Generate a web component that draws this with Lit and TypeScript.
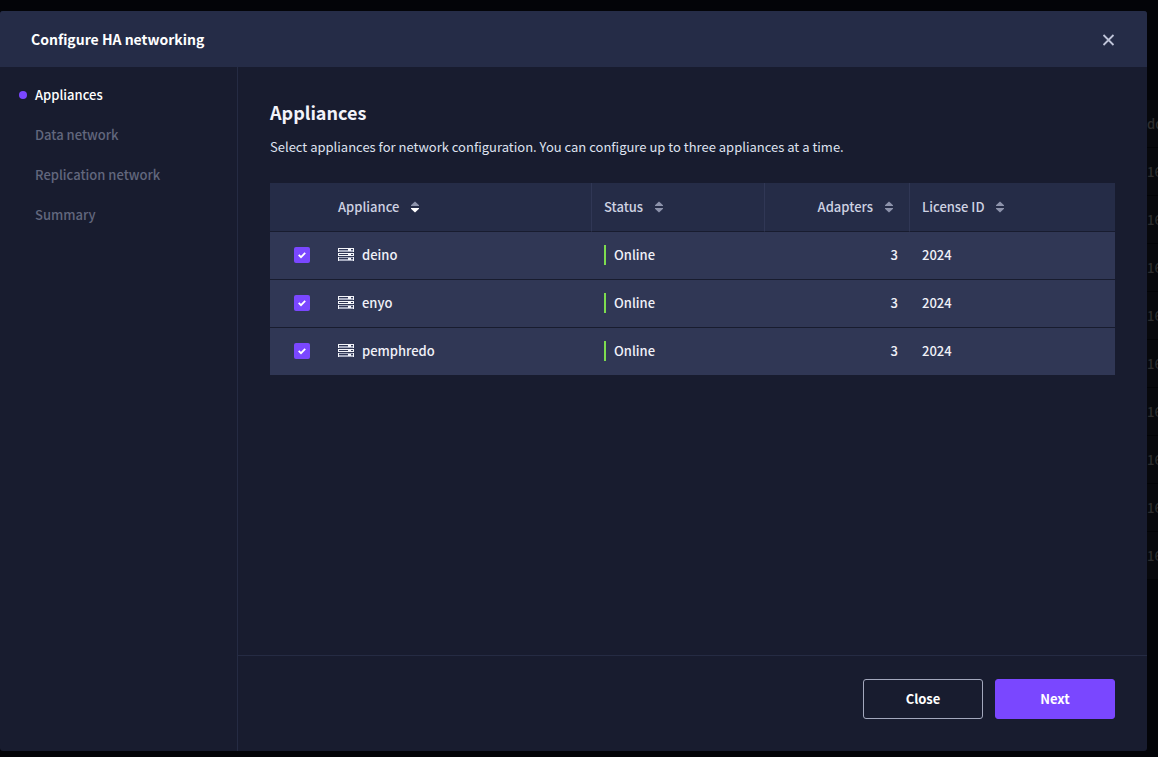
import { LitElement, html, svg, css } from "lit";
import { customElement, state, property } from "lit/decorators.js";
import { classMap } from "lit/directives/class-map.js";

interface Appliance {
  name: string;
  status: string;
  adapters: number;
  license: string;
  selected: boolean;
}

@customElement("sort-icon")
export class SortIcon extends LitElement {
  @property({ type: Boolean }) active = false;

  static styles = css`
    :host {
      display: inline-flex;
      justify-content: center;
      width: 16px;
      color: #8d93ab;
    }
    .down {
      fill: currentColor;
    }
    .up {
      fill: currentColor;
    }
    .on {
      fill: #ffffff;
    }
  `;

  render() {
    return html`<svg width="10" height="12" viewBox="0 0 10 12" aria-hidden="true">
      ${svg`<path class="up" d="M5 0.5 L9 4.2 V5 H1 V4.2 Z"></path>
      <path class=${classMap({ down: !this.active, on: this.active })} d="M1 7 H9 V7.8 L5 11.5 L1 7.8 Z"></path>`}
    </svg>`;
  }
}

@customElement("app-root")
export class AppRoot extends LitElement {
  @state() private steps = ["Appliances", "Data network", "Replication network", "Summary"];
  @state() private current = 0;
  @state() private appliances: Appliance[] = ["deino", "enyo", "pemphredo"].map((name) => ({
    name,
    status: "Online",
    adapters: 3,
    license: "2024",
    selected: true,
  }));
  private behind = ["dd", ...Array(9).fill("16")];

  static styles = css`
    :host {
      display: block;
      position: relative;
      min-height: 100vh;
      overflow: hidden;
      background: #030408;
      color: #dfe2f0;
      font-family: "Noto Sans CJK SC", "Noto Sans", sans-serif;
      font-size: 13px;
      line-height: 20px;
      font-weight: 500;
    }
    * {
      box-sizing: border-box;
    }
    .behind {
      display: flex;
      flex-direction: column;
      align-items: flex-end;
      padding-top: 100px;
    }
    .behind-cell {
      width: 11px;
      height: 48px;
      padding-top: 14px;
      overflow: hidden;
      border-bottom: 1px solid #020306;
      background: #07080c;
      color: #2d2d2e;
    }
    .dialog {
      position: absolute;
      inset: 11px 11px 6px 0;
      display: grid;
      grid-template: 56px 1fr / 238px 1fr;
      border-radius: 3px;
      overflow: hidden;
      background: #181c2f;
    }
    .bar {
      grid-column: 1 / -1;
      display: flex;
      align-items: center;
      justify-content: space-between;
      padding: 0 30px 0 31px;
      background: #252c47;
    }
    .bar-title {
      margin: 0;
      font-size: 14px;
      font-weight: 700;
      color: #ffffff;
    }
    .dismiss {
      display: flex;
      padding: 0;
      border: 0;
      background: none;
      color: #bfc4d8;
      cursor: pointer;
    }
    .steps {
      border-right: 1px solid #252b43;
      padding-top: 8px;
    }
    .step-list {
      margin: 0;
      padding: 0;
      list-style: none;
    }
    .step {
      display: flex;
      align-items: center;
      gap: 8px;
      height: 40px;
      padding-left: 19px;
      color: #62677d;
    }
    .step.current {
      color: #ffffff;
    }
    .dot {
      width: 8px;
      height: 8px;
      border-radius: 50%;
    }
    .current .dot {
      background: #7a47ff;
    }
    .content {
      display: flex;
      flex-direction: column;
      min-width: 0;
    }
    .panel {
      flex: 1;
      padding: 32px;
    }
    .title {
      margin: 0 0 10px;
      font-size: 18px;
      line-height: 26px;
      font-weight: 700;
      color: #f2f3fa;
    }
    .lead {
      margin: 0 0 24px;
      line-height: 24px;
      font-weight: 400;
    }
    .table {
      width: 100%;
      table-layout: fixed;
      border-collapse: separate;
      border-spacing: 0;
    }
    .col-check {
      width: 56px;
    }
    .col-name {
      width: 266px;
    }
    .col-status {
      width: 173px;
    }
    .col-adapters {
      width: 145px;
    }
    .head {
      height: 49px;
      padding: 0 12px 1px;
      text-align: left;
      font-weight: 500;
      color: #ced2e2;
      background: #252c47;
      border-bottom: 1px solid #181c2f;
    }
    .ruled {
      border-right: 1px solid #303755;
    }
    .sort {
      display: flex;
      align-items: center;
      gap: 8px;
      padding: 0;
      border: 0;
      background: none;
      color: inherit;
      font: inherit;
      cursor: pointer;
    }
    .cell {
      height: 48px;
      padding: 0 12px 1px;
      background: #303755;
      border-bottom: 1px solid #181c2f;
      color: #f0f1f8;
    }
    .check-cell {
      padding: 0 16px 1px 24px;
    }
    .number {
      text-align: right;
    }
    .number .sort {
      margin-left: auto;
    }
    .check {
      display: block;
      appearance: none;
      width: 16px;
      height: 16px;
      margin: 0;
      border: 1px solid #8d93ab;
      border-radius: 2px;
    }
    .check:checked {
      border: 0;
      background: #7a47ff
        url("data:image/svg+xml,%3Csvg xmlns='http://www.w3.org/2000/svg' viewBox='0 0 16 16'%3E%3Cpath d='M4.7 7.9l2.3 2.3 4.2-4.3' fill='none' stroke='white' stroke-width='1.8'/%3E%3C/svg%3E");
    }
    .name {
      display: flex;
      align-items: center;
      gap: 8px;
    }
    .status {
      display: block;
      padding-left: 8px;
      border-left: 2px solid #7ddc4f;
    }
    .footer {
      display: flex;
      justify-content: flex-end;
      gap: 12px;
      padding: 23px 32px 32px;
      border-top: 1px solid #252b43;
    }
    .button {
      width: 120px;
      height: 40px;
      padding: 0;
      border: 1px solid #a3a8bd;
      border-radius: 3px;
      background: transparent;
      color: #ffffff;
      font: inherit;
      font-weight: 700;
      cursor: pointer;
    }
    .primary {
      border-color: #7a47ff;
      background: #7a47ff;
    }
  `;

  private toggle(index: number) {
    this.appliances = this.appliances.map((a, i) => (i === index ? { ...a, selected: !a.selected } : a));
  }

  private sortButton(label: string, active = false) {
    return html`<button class="sort" type="button">${label}<sort-icon ?active=${active}></sort-icon></button>`;
  }

  private serverIcon() {
    return html`<svg width="16" height="14" viewBox="0 0 16 14" shape-rendering="crispEdges" aria-hidden="true">
      <path fill="#f4f5fa" d="M0 0h16v1H0z M0 5h16v1H0z M0 7h16v1H0z M0 1h1v3H0z M15 1h1v3h-1z M0 6h1v1H0z M15 6h1v1h-1z M0 9h1v4H0z M15 9h1v4h-1z M10 1h3v2h-3z M10 6h3v1h-3z M10 10h3v2h-3z"></path>
      <path fill="#a5aabe" d="M1 2h9v2H1z M10 3h3v1h-3z M13 2h2v2h-2z M1 9h14v1H1z M1 11h9v2H1z M10 12h3v1h-3z M13 11h2v2h-2z"></path>
    </svg>`;
  }

  render() {
    return html`
      <div class="behind" aria-hidden="true">
        ${this.behind.map((text) => html`<div class="behind-cell">${text}</div>`)}
      </div>
      <section class="dialog" role="dialog" aria-labelledby="dialog-title">
        <header class="bar">
          <h1 class="bar-title" id="dialog-title">Configure HA networking</h1>
          <button class="dismiss" type="button" aria-label="Dismiss">
            <svg width="17" height="17" viewBox="0 0 17 17">
              <path d="M3.5 4 L13.5 14 M13.5 4 L3.5 14" stroke="currentColor" stroke-width="1.8" fill="none"></path>
            </svg>
          </button>
        </header>
        <nav class="steps" aria-label="Steps">
          <ol class="step-list">
            ${this.steps.map(
              (step, i) => html`<li class=${classMap({ step: true, current: i === this.current })}>
                <span class="dot"></span>${step}
              </li>`
            )}
          </ol>
        </nav>
        <main class="content">
          <div class="panel">
            <h2 class="title">Appliances</h2>
            <p class="lead">
              Select appliances for network configuration. You can configure up to three appliances at a time.
            </p>
            <table class="table">
              <colgroup>
                <col class="col-check" />
                <col class="col-name" />
                <col class="col-status" />
                <col class="col-adapters" />
                <col />
              </colgroup>
              <thead>
                <tr>
                  <td class="head"></td>
                  <th class="head ruled" scope="col">${this.sortButton("Appliance", true)}</th>
                  <th class="head ruled" scope="col">${this.sortButton("Status")}</th>
                  <th class="head ruled number" scope="col">${this.sortButton("Adapters")}</th>
                  <th class="head" scope="col">${this.sortButton("License ID")}</th>
                </tr>
              </thead>
              <tbody>
                ${this.appliances.map(
                  (a, i) => html`<tr>
                    <td class="cell check-cell">
                      <input
                        class="check"
                        type="checkbox"
                        id="pick-${i}"
                        .checked=${a.selected}
                        @change=${() => this.toggle(i)}
                      />
                    </td>
                    <td class="cell"><label class="name" for="pick-${i}">${this.serverIcon()}${a.name}</label></td>
                    <td class="cell"><span class="status">${a.status}</span></td>
                    <td class="cell number">${a.adapters}</td>
                    <td class="cell">${a.license}</td>
                  </tr>`
                )}
              </tbody>
            </table>
          </div>
          <footer class="footer">
            <button class="button" type="button">Close</button>
            <button class="button primary" type="button">Next</button>
          </footer>
        </main>
      </section>
    `;
  }
}
